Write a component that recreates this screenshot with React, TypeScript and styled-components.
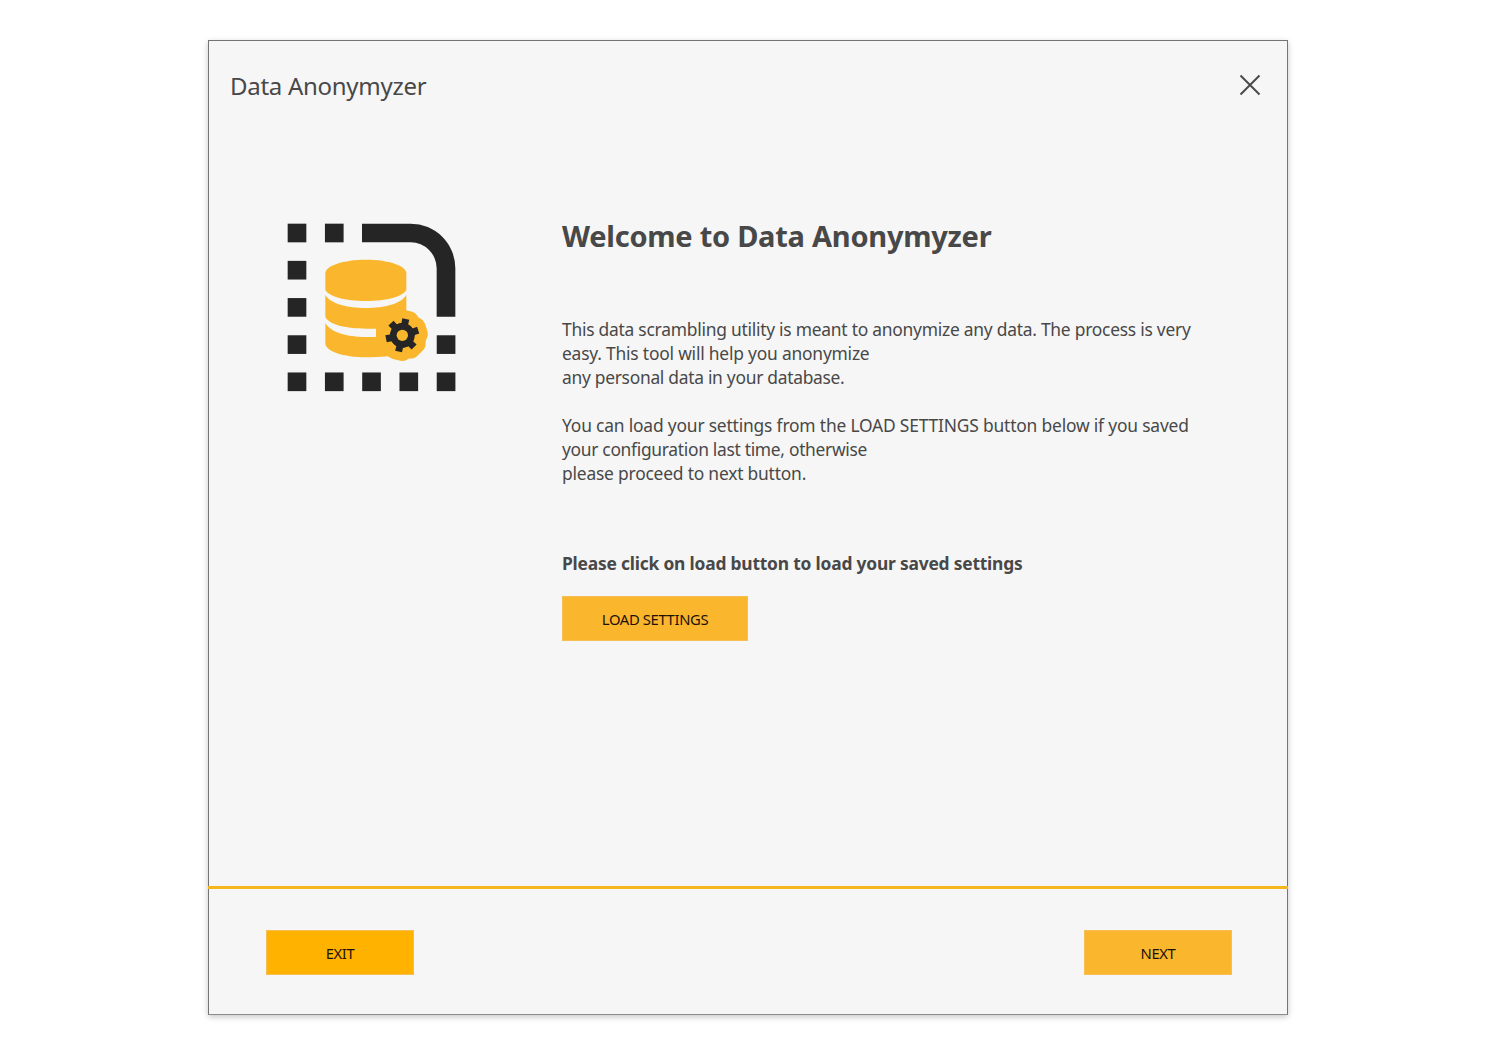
import React from "react";
import styled, { createGlobalStyle } from "styled-components";

const GlobalStyle = createGlobalStyle`
  * { box-sizing: border-box; }
  body {
    margin: 0;
    background: #ffffff;
    color: #484848;
    font-family: "Segoe UI", "Noto Sans", "Open Sans", sans-serif;
  }
`;

const Page = styled.div`
  display: flex;
  justify-content: center;
  width: 1500px;
  height: 1055px;
  padding: 40px 4px 0 0;
`;

const Window = styled.main`
  display: flex;
  flex-direction: column;
  width: 1080px;
  height: 975px;
  border: 1px solid #747474;
  border-bottom-color: #8c8c8c;
  background: #f6f6f6;
  box-shadow: 0 2px 6px rgba(0, 0, 0, 0.22);
`;

const Header = styled.header`
  display: flex;
  justify-content: space-between;
  align-items: center;
  height: 88px;
  padding: 2px 26px 0 21px;
`;

const AppName = styled.h1`
  margin: 0;
  font-size: 24px;
  font-weight: 400;
  line-height: 34px;
  letter-spacing: -0.28px;
  white-space: nowrap;
`;

const CloseButton = styled.button`
  display: flex;
  margin-bottom: 2px;
  padding: 0;
  border: 0;
  background: none;
  color: #4a4a4a;
`;

const Body = styled.section`
  display: flex;
  flex: 1;
  padding: 92px 0 0 78px;
`;

const Artwork = styled.div`
  width: 275px;
  flex: none;
  padding-top: 2px;
`;

const Copy = styled.div`
  display: flex;
  flex-direction: column;
  align-items: flex-start;
`;

const Heading = styled.h2`
  margin: -5px 0 0;
  font-size: 29px;
  font-weight: 700;
  line-height: 40px;
  letter-spacing: -0.25px;
  white-space: nowrap;
`;

const Paragraph = styled.p<{ $top: number }>`
  margin: ${(p) => p.$top}px 0 0;
  font-size: 17.4px;
  line-height: 24px;
`;

const Line = styled.span<{ $track: number }>`
  display: block;
  white-space: nowrap;
  letter-spacing: ${(p) => p.$track}px;
`;

const Prompt = styled.p`
  margin: 66px 0 21px;
  font-size: 17.4px;
  font-weight: 700;
  line-height: 24px;
  letter-spacing: -0.2px;
  white-space: nowrap;
`;

const ActionButton = styled.button<{ $width: number; $strong?: boolean }>`
  width: ${(p) => p.$width}px;
  height: 45px;
  padding: 0;
  border: 1px solid #f6bf55;
  background: ${(p) => (p.$strong ? "#ffb200" : "#fab62d")};
  color: #1c1208;
  font-family: inherit;
  font-size: 14.8px;
  line-height: 20px;
  letter-spacing: -0.36px;
`;

const Footer = styled.footer`
  display: flex;
  justify-content: space-between;
  height: 128px;
  margin: 0 -1px;
  padding: 41px 56px 0 58px;
  border-top: 3px solid #f5b61d;
`;

const SQUARES = [
  [0, 0], [1, 0],
  [0, 1], [0, 2], [0, 3], [4, 3],
  [0, 4], [1, 4], [2, 4], [3, 4], [4, 4],
];

const polar = (radius: number, degrees: number) => {
  const a = (degrees * Math.PI) / 180;
  return `${(397 + radius * Math.sin(a)).toFixed(1)} ${(376 - radius * Math.cos(a)).toFixed(1)}`;
};

const gear = (root: number, tip: number, rootSpan: number, tipSpan: number) =>
  "M" +
  [12, 72, 135, 193, 258, 317]
    .flatMap((t) => [
      polar(root, t - rootSpan),
      polar(tip, t - tipSpan),
      polar(tip, t + tipSpan),
      polar(root, t + rootSpan),
    ])
    .join(" L") +
  "Z";

function DatabaseIcon() {
  return (
    <svg width="169" height="169" viewBox="51 39 507 507" aria-hidden="true">
      <g fill="#252525">
        {SQUARES.map(([c, r]) => (
          <rect key={`${c}-${r}`} x={53 + c * 111.8} y={41 + r * 111.6} width="56" height="56" />
        ))}
        <path d="M276 41H422A134 134 0 0 1 556 175V320H500V175A78 78 0 0 0 422 97H276Z" />
      </g>
      <g fill="#fab62d">
        <path d="M166 190C166 167 220 149 288 149S409 167 409 190V240C397 260 351 273 288 273S178 260 166 240Z" />
        <path d="M166 255C181 281 232 294 288 294S394 281 409 255V390H318V356H288C231 356 181 346 166 322Z" />
        <path d="M166 339C181 367 231 381 288 381H409V430C380 438 330 442 288 442C220 442 166 424 166 400Z" />
        <path d={gear(46, 50, 22, 14)} stroke="#fab62d" strokeWidth="54" strokeLinejoin="round" />
      </g>
      <circle cx="397" cy="376" r="37" fill="#252525" />
      <path d={gear(37, 51, 16, 12)} fill="#252525" />
      <circle cx="397" cy="376" r="17" fill="#fab62d" />
    </svg>
  );
}

function CloseIcon() {
  return (
    <svg width="22" height="22" viewBox="0 0 22 22" aria-hidden="true">
      <path d="M1.5 1.5 20.5 20.5M20.5 1.5 1.5 20.5" fill="none" stroke="currentColor" strokeWidth="2" />
    </svg>
  );
}

export default function App() {
  return (
    <>
      <GlobalStyle />
      <Page>
        <Window>
          <Header>
            <AppName>Data Anonymyzer</AppName>
            <CloseButton aria-label="Close">
              <CloseIcon />
            </CloseButton>
          </Header>
          <Body>
            <Artwork>
              <DatabaseIcon />
            </Artwork>
            <Copy>
              <Heading>Welcome to Data Anonymyzer</Heading>
              <Paragraph $top={61}>
                <Line $track={-0.24}>This data scrambling utility is meant to anonymize any data. The process is very</Line>
                <Line $track={-0.2}>easy. This tool will help you anonymize</Line>
                <Line $track={-0.28}>any personal data in your database.</Line>
              </Paragraph>
              <Paragraph $top={24}>
                <Line $track={-0.18}>You can load your settings from the LOAD SETTINGS button below if you saved</Line>
                <Line $track={-0.3}>your configuration last time, otherwise</Line>
                <Line $track={-0.2}>please proceed to next button.</Line>
              </Paragraph>
              <Prompt>Please click on load button to load your saved settings</Prompt>
              <ActionButton $width={186}>LOAD SETTINGS</ActionButton>
            </Copy>
          </Body>
          <Footer>
            <ActionButton $width={148} $strong>EXIT</ActionButton>
            <ActionButton $width={148}>NEXT</ActionButton>
          </Footer>
        </Window>
      </Page>
    </>
  );
}
